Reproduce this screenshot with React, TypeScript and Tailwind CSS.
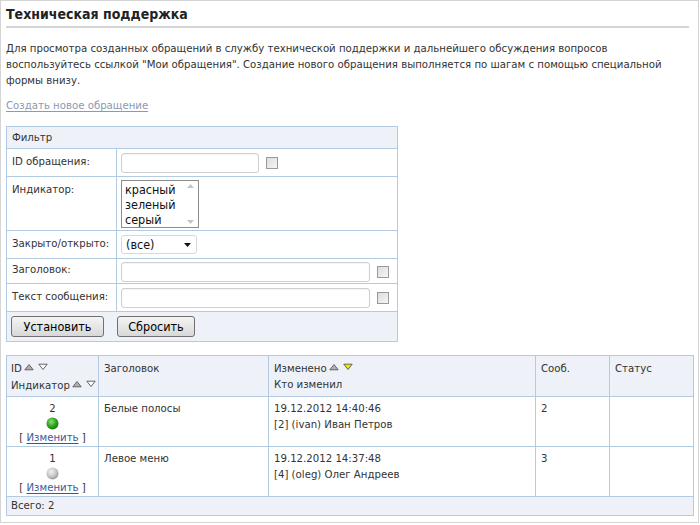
import React from "react";

const FONT = "font-['DejaVu_Sans_Condensed','Liberation_Sans',sans-serif]";

function SortArrows({ active }: { active?: "down" }) {
  return (
    <span className="inline-flex items-center gap-[4px] ml-[2px] align-[1px] leading-none">
      <svg width="10" height="8" viewBox="0 0 10 8" className="block">
        <path d="M0.8 6.8 L5 1.5 L9.2 6.8 Z" fill="#b0b0b0" stroke="#5a5a5a" strokeWidth="0.9" />
      </svg>
      <svg width="10" height="8" viewBox="0 0 10 8" className="block">
        <path
          d="M0.8 1.2 L5 6.5 L9.2 1.2 Z"
          fill={active === "down" ? "#f5e800" : "#fff"}
          stroke="#555"
          strokeWidth="0.9"
        />
      </svg>
    </span>
  );
}

function Ball({ color }: { color: "green" | "gray" }) {
  const id = `ball-${color}`;
  const stops =
    color === "green"
      ? ["#8ee07a", "#2fa51c", "#1e7d10"]
      : ["#f2f2f2", "#c8c8c8", "#9c9c9c"];
  return (
    <svg width="13" height="13" viewBox="0 0 13 13" className="mx-auto block">
      <defs>
        <radialGradient id={id} cx="40%" cy="35%" r="65%">
          <stop offset="0%" stopColor={stops[0]} />
          <stop offset="60%" stopColor={stops[1]} />
          <stop offset="100%" stopColor={stops[2]} />
        </radialGradient>
      </defs>
      <circle cx="6.5" cy="6.5" r="6" fill={`url(#${id})`} />
    </svg>
  );
}

function Checkbox() {
  return (
    <span className="inline-block w-[12px] h-[12px] border border-[#9a9a9a] bg-gradient-to-br from-[#dcdcdc] to-[#f6f6f6] align-middle" />
  );
}

function TextInput({ w }: { w: string }) {
  return (
    <span
      className={`inline-block h-[20px] ${w} border border-[#cfcfcf] rounded-[3px] bg-white align-middle shadow-[inset_0_1px_1px_rgba(0,0,0,0.05)]`}
    />
  );
}

function Button({ children, w }: { children: React.ReactNode; w: string }) {
  return (
    <span
      className={`inline-flex items-center justify-center h-[21px] ${w} border border-[#707070] rounded-[3px] bg-gradient-to-b from-[#f4f4f4] to-[#d8d8d8] text-[12.5px] text-black`}
    >
      {children}
    </span>
  );
}

const labelCell = "border border-[#b3cbe2] px-[5px] align-top text-[#333] whitespace-nowrap";
const valueCell = "border border-[#b3cbe2] px-[4px] align-top";

const ROWS = [
  {
    id: 2,
    ball: "green" as const,
    title: "Белые полосы",
    date: "19.12.2012 14:40:46",
    who: "[2] (ivan) Иван Петров",
    msgs: 2,
    h: "h-[49px]",
  },
  {
    id: 1,
    ball: "gray" as const,
    title: "Левое меню",
    date: "19.12.2012 14:37:48",
    who: "[4] (oleg) Олег Андреев",
    msgs: 3,
    h: "h-[48px]",
  },
];

export default function App() {
  const th = "border border-[#b3cbe2] px-[5px] pt-[5px] align-top text-left font-normal";
  const td = "border border-[#b3cbe2] px-[5px] pt-[4px] align-top";

  return (
    <div className={`${FONT} text-[11.3px] leading-[16px] text-[#333] bg-white`}>
      <div className="w-[699px] h-[523px] border border-[#d4d4d4] px-[5px] pt-[3px] overflow-hidden">
        <h1 className="text-[14px] leading-[20px] font-bold text-[#222] pb-[2px] mr-[4px] border-b-2 border-[#d4d4d4]">
          Техническая поддержка
        </h1>

        <p className="mt-[13px]">
          Для просмотра созданных обращений в службу технической поддержки и дальнейшего
          обсуждения вопросов
          <br />
          воспользуйтесь ссылкой "Мои обращения". Создание нового обращения выполняется по
          шагам с помощью специальной
          <br />
          формы внизу.
        </p>

        <a className="block mt-[9px] text-[#8a9ab4] underline underline-offset-2">
          Создать новое обращение
        </a>

        {/* Filter */}
        <table className="mt-[12px] w-[392px] border-collapse border border-[#b3cbe2] table-fixed">
          <colgroup>
            <col className="w-[110px]" />
            <col />
          </colgroup>
          <tbody>
            <tr className="h-[22px] bg-[#eef2f8]">
              <td colSpan={2} className="border border-[#b3cbe2] px-[5px] text-[#333]">
                Фильтр
              </td>
            </tr>
            <tr className="h-[28px]">
              <td className={`${labelCell} pt-[5px]`}>ID обращения:</td>
              <td className={`${valueCell} pt-[4px]`}>
                <div className="flex items-center gap-[7px]">
                  <TextInput w="w-[138px]" />
                  <Checkbox />
                </div>
              </td>
            </tr>
            <tr className="h-[54px]">
              <td className={`${labelCell} pt-[5px]`}>Индикатор:</td>
              <td className={`${valueCell} pt-[3px]`}>
                <div className="relative w-[78px] h-[48px] border border-[#8c8c8c] bg-white text-[12.5px] leading-[15px] text-[#111] pl-[3px] pt-[1px]">
                  <div>красный</div>
                  <div>зеленый</div>
                  <div>серый</div>
                  <div className="absolute right-0 top-0 bottom-0 w-[15px] flex flex-col justify-between items-center py-[3px]">
                    <svg width="7" height="4" viewBox="0 0 7 4">
                      <path d="M0 4 L3.5 0 L7 4 Z" fill="#c4c4c4" />
                    </svg>
                    <svg width="7" height="4" viewBox="0 0 7 4">
                      <path d="M0 0 L3.5 4 L7 0 Z" fill="#c4c4c4" />
                    </svg>
                  </div>
                </div>
              </td>
            </tr>
            <tr className="h-[28px]">
              <td className={`${labelCell} pt-[5px]`}>Закрыто/открыто:</td>
              <td className={`${valueCell} pt-[4px]`}>
                <div className="flex items-center justify-between w-[76px] h-[19px] border border-[#d8d8d8] rounded-[3px] bg-white pl-[4px] pr-[5px] text-[12.5px] text-[#111]">
                  <span>(все)</span>
                  <svg width="7" height="4" viewBox="0 0 7 4">
                    <path d="M0 0 L3.5 4 L7 0 Z" fill="#111" />
                  </svg>
                </div>
              </td>
            </tr>
            <tr className="h-[25px]">
              <td className={`${labelCell} pt-[3px]`}>Заголовок:</td>
              <td className={`${valueCell} pt-[3px]`}>
                <div className="flex items-center gap-[7px]">
                  <TextInput w="w-[249px]" />
                  <Checkbox />
                </div>
              </td>
            </tr>
            <tr className="h-[28px]">
              <td className={`${labelCell} pt-[5px]`}>Текст сообщения:</td>
              <td className={`${valueCell} pt-[4px]`}>
                <div className="flex items-center gap-[7px]">
                  <TextInput w="w-[249px]" />
                  <Checkbox />
                </div>
              </td>
            </tr>
            <tr className="h-[30px] bg-[#eef2f8]">
              <td colSpan={2} className="border border-[#b3cbe2] px-[4px]">
                <div className="flex items-center gap-[13px]">
                  <Button w="w-[93px]">Установить</Button>
                  <Button w="w-[78px]">Сбросить</Button>
                </div>
              </td>
            </tr>
          </tbody>
        </table>

        {/* Tickets */}
        <table className="mt-[13px] w-[688px] border-collapse border border-[#b3cbe2] table-fixed">
          <colgroup>
            <col className="w-[92px]" />
            <col className="w-[170px]" />
            <col className="w-[267px]" />
            <col className="w-[74px]" />
            <col />
          </colgroup>
          <thead>
            <tr className="h-[41px] bg-[#eef2f8]">
              <th className={`${th} pl-[4px]`}>
                <div className="whitespace-nowrap h-[16px]">
                  ID
                  <SortArrows />
                </div>
                <div className="whitespace-nowrap mt-[1px] h-[16px]">
                  Индикатор
                  <SortArrows />
                </div>
              </th>
              <th className={th}>Заголовок</th>
              <th className={th}>
                <div className="whitespace-nowrap h-[16px]">
                  Изменено
                  <SortArrows active="down" />
                </div>
                <div>Кто изменил</div>
              </th>
              <th className={th}>Сооб.</th>
              <th className={th}>Статус</th>
            </tr>
          </thead>
          <tbody>
            {ROWS.map((r) => (
              <tr key={r.id} className={r.h}>
                <td className={`${td} text-center`}>
                  <div>{r.id}</div>
                  <Ball color={r.ball} />
                  <div>
                    [ <a className="text-[#3b5998] underline underline-offset-2">Изменить</a> ]
                  </div>
                </td>
                <td className={td}>{r.title}</td>
                <td className={td}>
                  <div>{r.date}</div>
                  <div>{r.who}</div>
                </td>
                <td className={td}>{r.msgs}</td>
                <td className={td}></td>
              </tr>
            ))}
            <tr className="h-[19px] bg-[#eef2f8]">
              <td colSpan={5} className="border border-[#b3cbe2] px-[4px]">
                Всего: 2
              </td>
            </tr>
          </tbody>
        </table>
      </div>
    </div>
  );
}
